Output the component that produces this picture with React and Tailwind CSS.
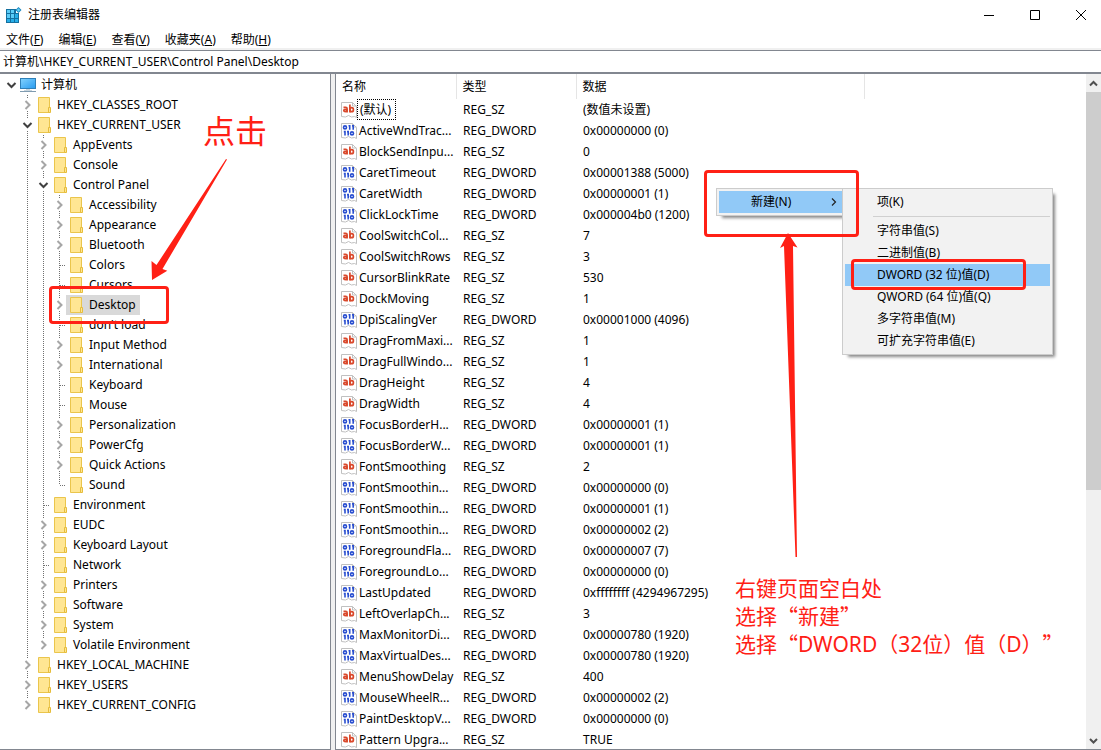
import React from "react";

const menus = [
  { label: "文件", hotkey: "F" },
  { label: "编辑", hotkey: "E" },
  { label: "查看", hotkey: "V" },
  { label: "收藏夹", hotkey: "A" },
  { label: "帮助", hotkey: "H" },
];

// level: depth under the computer node, state: open, closed or leaf
const treeItems = [
  { name: "HKEY_CLASSES_ROOT", level: 1, state: "closed" },
  { name: "HKEY_CURRENT_USER", level: 1, state: "open" },
  { name: "AppEvents", level: 2, state: "closed" },
  { name: "Console", level: 2, state: "closed" },
  { name: "Control Panel", level: 2, state: "open" },
  { name: "Accessibility", level: 3, state: "closed" },
  { name: "Appearance", level: 3, state: "closed" },
  { name: "Bluetooth", level: 3, state: "closed" },
  { name: "Colors", level: 3, state: "leaf" },
  { name: "Cursors", level: 3, state: "leaf" },
  { name: "Desktop", level: 3, state: "closed", selected: true },
  { name: "don't load", level: 3, state: "leaf" },
  { name: "Input Method", level: 3, state: "closed" },
  { name: "International", level: 3, state: "closed" },
  { name: "Keyboard", level: 3, state: "leaf" },
  { name: "Mouse", level: 3, state: "leaf" },
  { name: "Personalization", level: 3, state: "closed" },
  { name: "PowerCfg", level: 3, state: "closed" },
  { name: "Quick Actions", level: 3, state: "closed" },
  { name: "Sound", level: 3, state: "leaf", last: true },
  { name: "Environment", level: 2, state: "leaf" },
  { name: "EUDC", level: 2, state: "closed" },
  { name: "Keyboard Layout", level: 2, state: "closed" },
  { name: "Network", level: 2, state: "leaf" },
  { name: "Printers", level: 2, state: "closed" },
  { name: "Software", level: 2, state: "closed" },
  { name: "System", level: 2, state: "closed" },
  { name: "Volatile Environment", level: 2, state: "closed", last: true },
  { name: "HKEY_LOCAL_MACHINE", level: 1, state: "closed" },
  { name: "HKEY_USERS", level: 1, state: "closed" },
  { name: "HKEY_CURRENT_CONFIG", level: 1, state: "closed", last: true },
];

const values = [
  ["(默认)", "REG_SZ", "(数值未设置)"],
  ["ActiveWndTrac...", "REG_DWORD", "0x00000000 (0)"],
  ["BlockSendInpu...", "REG_SZ", "0"],
  ["CaretTimeout", "REG_DWORD", "0x00001388 (5000)"],
  ["CaretWidth", "REG_DWORD", "0x00000001 (1)"],
  ["ClickLockTime", "REG_DWORD", "0x000004b0 (1200)"],
  ["CoolSwitchCol...", "REG_SZ", "7"],
  ["CoolSwitchRows", "REG_SZ", "3"],
  ["CursorBlinkRate", "REG_SZ", "530"],
  ["DockMoving", "REG_SZ", "1"],
  ["DpiScalingVer", "REG_DWORD", "0x00001000 (4096)"],
  ["DragFromMaxi...", "REG_SZ", "1"],
  ["DragFullWindo...", "REG_SZ", "1"],
  ["DragHeight", "REG_SZ", "4"],
  ["DragWidth", "REG_SZ", "4"],
  ["FocusBorderH...", "REG_DWORD", "0x00000001 (1)"],
  ["FocusBorderW...", "REG_DWORD", "0x00000001 (1)"],
  ["FontSmoothing", "REG_SZ", "2"],
  ["FontSmoothin...", "REG_DWORD", "0x00000000 (0)"],
  ["FontSmoothin...", "REG_DWORD", "0x00000001 (1)"],
  ["FontSmoothin...", "REG_DWORD", "0x00000002 (2)"],
  ["ForegroundFla...", "REG_DWORD", "0x00000007 (7)"],
  ["ForegroundLo...", "REG_DWORD", "0x00000000 (0)"],
  ["LastUpdated", "REG_DWORD", "0xffffffff (4294967295)"],
  ["LeftOverlapCh...", "REG_SZ", "3"],
  ["MaxMonitorDi...", "REG_DWORD", "0x00000780 (1920)"],
  ["MaxVirtualDes...", "REG_DWORD", "0x00000780 (1920)"],
  ["MenuShowDelay", "REG_SZ", "400"],
  ["MouseWheelR...", "REG_DWORD", "0x00000002 (2)"],
  ["PaintDesktopV...", "REG_DWORD", "0x00000000 (0)"],
  ["Pattern Upgra...", "REG_SZ", "TRUE"],
];

const newItems = [
  "字符串值(S)",
  "二进制值(B)",
  "DWORD (32 位)值(D)",
  "QWORD (64 位)值(Q)",
  "多字符串值(M)",
  "可扩充字符串值(E)",
];

const RegeditIcon = () => (
  <svg width="16" height="16" viewBox="0 0 16 16" className="shrink-0">
    <path d="M0 2h10v4h3v10H0z" fill="#14709f" />
    <path d="M1 3h3v3H1zM5 3h3v3H5zM1 7h3v4H1zM5 7h3v4H5z" fill="#5ccdf8" />
    <path d="M9 7h3v4H9zM1 12h3v3H1zM5 12h3v3H5zM9 12h3v3H9z" fill="#27aee8" />
    <path d="M12.5 0l3 3-3 3-3-3z" fill="#1b86bd" />
    <path d="M12.5 1.3L14.2 3l-1.7 1.7L10.8 3z" fill="#5fd0f8" />
  </svg>
);

const ComputerIcon = () => (
  <svg width="16" height="16" viewBox="0 0 16 16" className="shrink-0">
    <defs>
      <linearGradient id="screen" x1="0" y1="0" x2="1" y2="1">
        <stop offset="0" stopColor="#7fd0fd" />
        <stop offset="1" stopColor="#2b9df0" />
      </linearGradient>
    </defs>
    <path d="M0 1h16v11H0z" fill="#2f80b8" />
    <path d="M1 2h14v9H1z" fill="url(#screen)" />
    <path d="M6 12h4v1H6zM4 13h8v1H4z" fill="#c9d5dd" />
    <path d="M0 14h16v1H0z" fill="#7f9bb0" />
  </svg>
);

const FolderIcon = () => (
  <svg width="14" height="16" viewBox="0 0 14 16" className="shrink-0">
    <path d="M.5.5h11v15H.5z" fill="#ffe693" stroke="#eac54c" />
    <path d="M10.5 10.5h2v5h-2z" fill="#ffe693" stroke="#e6bd3c" />
  </svg>
);

const Chevron = ({ open }) => (
  <svg width="11" height="10" viewBox="0 0 11 10" fill="none" className="shrink-0">
    {open ? (
      <path d="M1.5 3l4 4 4-4" stroke="#404040" strokeWidth="2" />
    ) : (
      <path d="M3.5 1l4 4-4 4" stroke="#a6a6a6" strokeWidth="2" />
    )}
  </svg>
);

const ValueIcon = ({ type }) => (
  <svg width="16" height="16" viewBox="0 0 16 16" className="shrink-0">
    <path d="M.5.5h11l4 4v11l-2-1-3 .5-3-1.5-3 1.500-4-.5z" fill="#fff" stroke="#c0c0c0" />
    <path d="M11.5.5V4h4" fill="none" stroke="#c0c0c0" />
    {type === "REG_SZ" ? (
      <g fill="none" stroke="#d9482b" strokeWidth="1.7">
        <path d="M2.5 5.300h2.200q1.400 0 1.400 1.400v3.800" />
        <ellipse cx="4.3" cy="8.5" rx="1.5" ry="1.1" />
        <path d="M8.9 2.500v8" />
        <ellipse cx="10.7" cy="7.7" rx="1.7" ry="2" />
      </g>
    ) : (
      <g fill="none" stroke="#2a4fd0" strokeWidth="1.6">
        <ellipse cx="4" cy="4.4" rx="1.5" ry="1.5" />
        <path d="M7.5 2.800h1.200v4M11 2.800h1.200v4" />
        <path d="M2.8 8.600H4v4M6 8.600h1.200v4" />
        <ellipse cx="11" cy="10.4" rx="1.5" ry="1.5" />
      </g>
    )}
  </svg>
);

// dotted connector paths, one 16px column each
const lines = {
  through: "M5.5 0v20",
  leaf: "M5.5 0v20M6 10.5h6",
  lastLeaf: "M5.5 0v10M6 10.5h6",
  node: "M5.5 0v4M5.5 16v4",
  lastNode: "M5.5 0v4",
};

const Dots = ({ kind }) => (
  <svg width="16" height="20" viewBox="0 0 16 20" className="shrink-0" fill="none" stroke="#707070" strokeDasharray="1 1">
    <path d={lines[kind]} />
  </svg>
);

const TreeRow = ({ item }) => (
  <li className="flex h-5 items-center pl-[22px]">
    {item.level > 1 && <Dots kind="through" />}
    {item.level > 2 && <Dots kind="through" />}
    {item.state === "leaf" ? (
      <Dots kind={item.last ? "lastLeaf" : "leaf"} />
    ) : (
      <span className="grid w-4 shrink-0 items-center">
        <span className="col-start-1 row-start-1">
          <Dots kind={item.last ? "lastNode" : "node"} />
        </span>
        <span className="col-start-1 row-start-1">
          <Chevron open={item.state === "open"} />
        </span>
      </span>
    )}
    <span
      className={
        item.selected
          ? "-ml-1 flex h-5 items-center gap-[5px] bg-[#d9d9d9] px-1"
          : "-ml-1 flex h-5 items-center gap-[5px] px-1"
      }
    >
      <FolderIcon />
      {item.name}
    </span>
  </li>
);

const Tree = () => (
  <nav className="w-[331px] shrink-0 overflow-hidden border-r border-b border-[#828790] bg-white pt-px">
    <ul>
      <li className="flex h-5 items-center pl-[6px]">
        <Chevron open />
        <span className="ml-[3px] flex items-center gap-[5px]">
          <ComputerIcon />
          计算机
        </span>
      </li>
      {treeItems.map((item) => (
        <TreeRow key={item.name} item={item} />
      ))}
    </ul>
  </nav>
);

const ValueTable = () => (
  <table className="w-full table-fixed self-start text-left">
    <colgroup>
      <col className="w-[120px]" />
      <col className="w-[120px]" />
      <col className="w-[288px]" />
      <col />
    </colgroup>
    <thead>
      <tr className="h-[25px]">
        <th className="border-r border-[#e5e5e5] pl-[6px] font-normal">名称</th>
        <th className="border-r border-[#e5e5e5] pl-[6px] font-normal">类型</th>
        <th className="border-r border-[#e5e5e5] pl-[6px] font-normal">数据</th>
        <th></th>
      </tr>
    </thead>
    <tbody>
      {values.map(([name, type, data], i) => (
        <tr key={i} className="h-[21px] leading-5 whitespace-nowrap">
          <td className="p-0 pl-[5px]">
            <div className="flex items-center">
              <ValueIcon type={type} />
              <span className={i === 0 ? "border border-dotted border-black pr-1 pl-0.5 leading-[19px]" : "pl-0.5"}>
                {name}
              </span>
            </div>
          </td>
          <td className="p-0 pl-[7px]">{type}</td>
          <td className="p-0 pl-[7px]">{data}</td>
          <td></td>
        </tr>
      ))}
    </tbody>
  </table>
);

const ScrollBar = () => (
  <div className="flex w-[15px] shrink-0 flex-col bg-[#f0f0f0]">
    <button aria-label="向上滚动" className="flex h-[18px] shrink-0 items-center justify-center">
      <svg width="9" height="9" viewBox="0 0 9 9" fill="none" stroke="#505050" strokeWidth="2">
        <path d="M1 6.5L4.5 3 8 6.5" />
      </svg>
    </button>
    <div className="h-[59%] bg-[#cdcdcd]"></div>
    <div className="flex-1"></div>
    <button aria-label="向下滚动" className="flex h-[18px] shrink-0 items-center justify-center">
      <svg width="9" height="9" viewBox="0 0 9 9" fill="none" stroke="#505050" strokeWidth="2">
        <path d="M1 3l3.5 3.5L8 3" />
      </svg>
    </button>
  </div>
);

const ContextMenu = () => (
  <div className="absolute top-[188px] left-[716px] flex items-start">
    <div className="w-[127px] border border-[#ccc] bg-[#f2f2f2] py-0.5 pl-0.5 shadow-[4px_4px_3px_-2px_#888]">
      <button className="flex h-[22px] w-full items-center justify-between bg-[#91c9f7] pr-[5px] pl-8">
        新建(N)
        <svg width="6" height="8" viewBox="0 0 6 8" fill="none" stroke="#222" strokeWidth="1.2">
          <path d="M1 .5L4.5 4 1 7.5" />
        </svg>
      </button>
    </div>
    <div className="relative -ml-px w-[211px] border border-[#ccc] bg-[#f2f2f2] p-0.5 shadow-[4px_4px_3px_-2px_#888]">
      <button className="block h-[22px] w-full pl-8 text-left">项(K)</button>
      <div className="my-[3px] ml-7 h-px bg-[#d0d0d0]"></div>
      {newItems.map((label) => (
        <button
          key={label}
          className={
            label.startsWith("DWORD")
              ? "block h-[22px] w-full bg-[#91c9f7] pl-8 text-left"
              : "block h-[22px] w-full pl-8 text-left"
          }
        >
          {label}
        </button>
      ))}
    </div>
  </div>
);

// full-width Chinese quotation mark
const Quote = ({ children }) => (
  <span className="font-['Noto_Sans_CJK_SC',sans-serif] leading-none">{children}</span>
);

const Annotations = () => (
  <div className="pointer-events-none absolute inset-0 text-[#ff2015]">
    <div className="absolute top-[286px] left-[49px] h-[38px] w-[120px] rounded-sm border-3 border-[#ff2015]"></div>
    <div className="absolute top-[170px] left-[704px] h-[67px] w-[155px] rounded-sm border-3 border-[#ff2015]"></div>
    <div className="absolute top-[259px] left-[851px] h-[31px] w-[175px] rounded-sm border-3 border-[#ff2015]"></div>
    <svg width="1101" height="750" viewBox="0 0 1101 750" className="absolute top-0 left-0" fill="#ff2015">
      <path d="M226 159l1 .5L162.5 269l4.800 1.700L152 280l-.5-19 5 4z" />
      <path d="M788 233l9.500 14.500-4.500-1.500 4 311h-1.500L784 246l-4 2z" />
    </svg>
    <p className="absolute top-[107px] left-[203px] text-[32px] leading-[48px]">点击</p>
    <div
      lang="zh-CN"
      className="absolute top-[574px] left-[735px] text-[21px] leading-7 whitespace-nowrap [text-spacing-trim:space-all]"
    >
      <p>右键页面空白处</p>
      <p>
        选择<Quote>“</Quote>新建<Quote>”</Quote>
      </p>
      <p>
        选择<Quote>“</Quote>DWORD（32位）值（D）<Quote>”</Quote>
      </p>
    </div>
  </div>
);

const App = () => {
  return (
    <div className="relative flex h-screen flex-col overflow-hidden bg-white font-['Noto_Sans','Noto_Sans_CJK_SC',sans-serif] text-[12px] text-black">
      <header className="flex h-[29px] shrink-0 items-center pl-1.5">
        <RegeditIcon />
        <h1 className="ml-[6px] flex-1">注册表编辑器</h1>
        <div className="flex h-full gap-9 pr-[15px]">
          <button aria-label="最小化" className="flex items-center">
            <svg width="10" height="10" viewBox="0 0 10 10" stroke="#000">
              <path d="M0 5.5h10" />
            </svg>
          </button>
          <button aria-label="最大化" className="flex items-center">
            <svg width="10" height="10" viewBox="0 0 10 10" fill="none" stroke="#000">
              <path d="M.5.5h9v9h-9z" />
            </svg>
          </button>
          <button aria-label="关闭" className="flex items-center">
            <svg width="10" height="10" viewBox="0 0 10 10" stroke="#000">
              <path d="M0 0l10 10M10 0L0 10" />
            </svg>
          </button>
        </div>
      </header>
      <div className="flex h-[22px] shrink-0 items-center gap-[15px] border-b border-[#828790] pl-1.5 shadow-[inset_0_-2px_0_#f0f0f0]">
        {menus.map((m) => (
          <button key={m.hotkey}>
            {m.label}(<u>{m.hotkey}</u>)
          </button>
        ))}
      </div>
      <input
        aria-label="地址"
        className="h-[23px] shrink-0 border-b-2 border-[#828790] pb-0.5 pl-[3px] outline-none"
        defaultValue="计算机\HKEY_CURRENT_USER\Control Panel\Desktop"
      />
      <main className="flex min-h-0 flex-1 gap-1 bg-[#f0f0f0]">
        <Tree />
        <section className="flex min-w-0 flex-1 overflow-hidden border-b border-l border-[#828790] bg-white">
          <ValueTable />
          <ScrollBar />
        </section>
      </main>
      <ContextMenu />
      <Annotations />
    </div>
  );
};

export default App;
